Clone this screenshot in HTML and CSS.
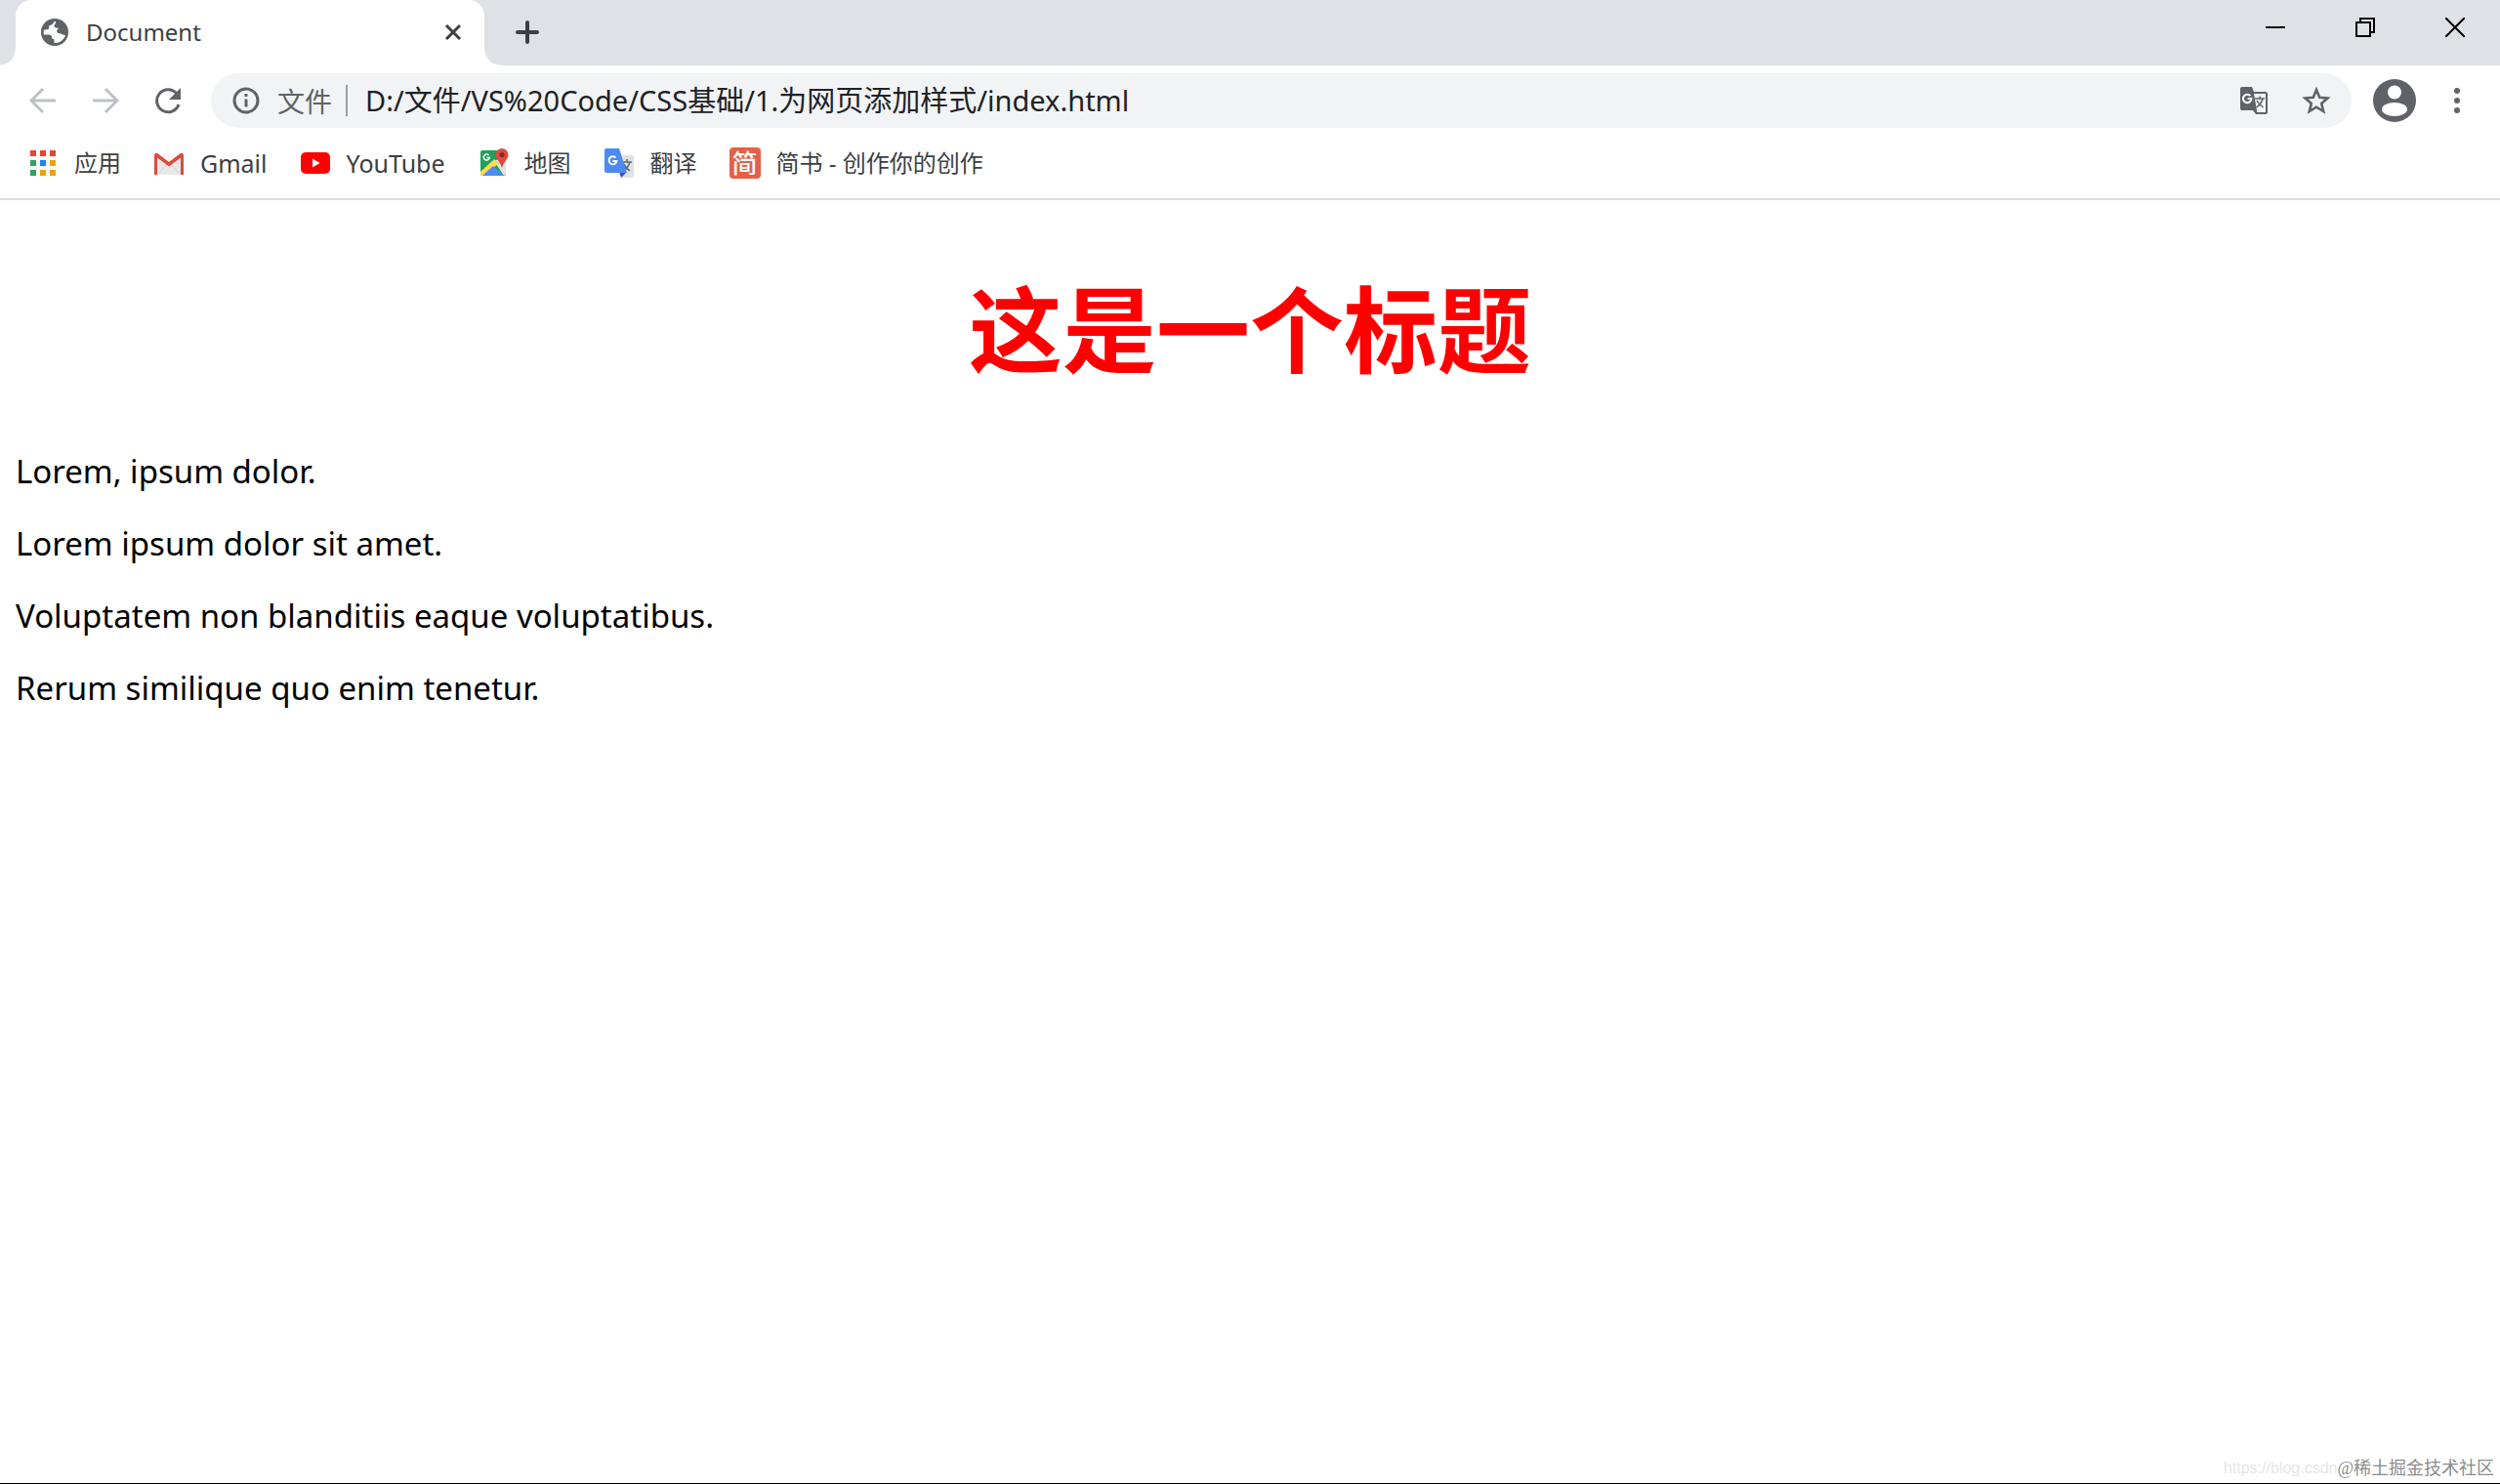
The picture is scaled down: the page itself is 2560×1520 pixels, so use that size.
FILE: index.html
```
<!DOCTYPE html>
<html lang="zh-CN">
<head>
    <meta charset="UTF-8">
    <meta name="viewport" content="width=device-width, initial-scale=1.0">
    <title>Document</title>
    <link rel="stylesheet" href="styles.css">
</head>
<body>
    <header class="browser">
        <div class="tab-strip">
            <div class="tab">
                <svg class="tab-icon" viewBox="2 2 20 20">
                    <circle cx="12" cy="12" r="10" fill="#5f6368"/>
                    <path fill="#fff" d="M12.500 3.900c-1.500.2-1.300 1.700-2.300 2.300-.8.500-1.900.3-2.200 1.200-.3.800.2 1.700-.5 2.300-.8.600-2 .3-3.200.6-.5 1.100-.5 2.400-.2 3.500h3.400c1.900 0 2.500 1 2.500 2.200 0 .8.700 1.200 1.600 1.200v2.700c3.800.3 7.300-2.300 8.300-5.900-.9.400-1.800.1-2.500-.5-.9-.8-2.700-.3-3.500-1.300-.8-1.100-.1-2.600 1.300-2.900-1.200-.5-3.200-.2-3.600-1.500-.3-1.200 1-1.600 1.200-2.500.1-.5 0-1-.3-1.400z"/>
                </svg>
                <span class="tab-title">Document</span>
                <button class="tab-close" aria-label="关闭标签页">
                    <svg width="18" height="20" viewBox="0 0 18 20"><path d="M2 3l14 14M16 3L2 17" stroke="#3c4043" stroke-width="3"/></svg>
                </button>
            </div>
            <button class="new-tab" aria-label="新标签页">
                <svg width="24" height="24" viewBox="0 0 24 24"><path d="M12 2v20M2 12h20" stroke="#3c4043" stroke-width="4" stroke-linecap="round"/></svg>
            </button>
            <div class="window-buttons">
                <button aria-label="最小化">
                    <svg width="20" height="20" viewBox="0 0 20 20"><path d="M0 10h20" stroke="#000" stroke-width="2"/></svg>
                </button>
                <button aria-label="还原">
                    <svg width="20" height="20" viewBox="0 0 20 20" fill="none" stroke="#000" stroke-width="2"><path d="M1 5h14v14H1zM5 5V1h14v14h-4"/></svg>
                </button>
                <button aria-label="关闭">
                    <svg width="20" height="20" viewBox="0 0 20 20"><path d="M0 0l20 20M20 0L0 20" stroke="#000" stroke-width="2"/></svg>
                </button>
            </div>
        </div>

        <div class="toolbar">
            <button class="nav-button" aria-label="后退">
                <svg width="28" height="28" viewBox="0 0 28 28" fill="none" stroke="#bdc1c6" stroke-width="3"><path d="M27 14H3M14 2L2 14l12 12"/></svg>
            </button>
            <button class="nav-button" aria-label="前进">
                <svg width="28" height="28" viewBox="0 0 28 28" fill="none" stroke="#bdc1c6" stroke-width="3"><path d="M1 14h24M14 2l12 12-12 12"/></svg>
            </button>
            <button class="nav-button" aria-label="重新加载">
                <svg width="28" height="28" viewBox="0 0 28 28"><path d="M23 7A11.500 11.500 0 1 0 25 18" fill="none" stroke="#5f6368" stroke-width="3"/><path d="M27 1v12H15z" fill="#5f6368"/></svg>
            </button>
            <div class="omnibox">
                <button class="site-info">
                    <svg width="28" height="28" viewBox="0 0 28 28"><circle cx="14" cy="14" r="12" fill="none" stroke="#5f6368" stroke-width="3"/><path d="M14 7v3M14 12.500v8" stroke="#5f6368" stroke-width="3"/></svg>
                    <span>文件</span>
                </button>
                <input class="address" type="text" aria-label="地址" value="D:/文件/VS%20Code/CSS基础/1.为网页添加样式/index.html">
                <button class="omnibox-action" aria-label="翻译此页">
                    <svg width="28" height="28" viewBox="0 0 28 28">
                        <path d="M2 0h10l2 5h12a2 2 0 0 1 2 2v19a2 2 0 0 1-2 2H16l-3-4H2a2 2 0 0 1-2-2V2a2 2 0 0 1 2-2z" fill="#5f6368"/>
                        <path d="M14 7h12v19H17v-2z" fill="#f1f3f4"/>
                        <path d="M10.500 9.200A4.300 4.300 0 1 0 11.500 12H7.500" fill="none" stroke="#fff" stroke-width="2"/>
                        <path d="M15 12h10M20 9.500V12M23 12c-1 4-3.500 7-6.500 9M17 14c1.500 3 3.500 5 6.500 7" fill="none" stroke="#5f6368" stroke-width="1.500"/>
                    </svg>
                </button>
                <button class="omnibox-action" aria-label="为此标签页添加书签">
                    <svg width="30" height="30" viewBox="0 0 30 30"><path d="M15 4l3.200 7.800 8.300.7-6.300 5.400 2 8.200-7.200-4.400-7.200 4.400 2-8.200-6.300-5.400 8.300-.7z" fill="none" stroke="#5f6368" stroke-width="2.600"/></svg>
                </button>
            </div>
            <button class="profile" aria-label="个人资料">
                <svg width="44" height="44" viewBox="0 0 44 44"><circle cx="22" cy="22" r="22" fill="#5f6368"/><circle cx="22" cy="13.500" r="7" fill="#fff"/><ellipse cx="22" cy="31" rx="13" ry="7" fill="#fff"/></svg>
            </button>
            <button class="menu" aria-label="菜单">
                <svg width="6" height="26" viewBox="0 0 6 26" fill="#5f6368"><circle cx="3" cy="3" r="3"/><circle cx="3" cy="13" r="3"/><circle cx="3" cy="23" r="3"/></svg>
            </button>
        </div>

        <nav class="bookmarks">
            <a href="#">
                <svg viewBox="0 0 32 32">
                    <path fill="#ea4335" d="M3 3h6v6H3zM13 3h6v6h-6zM23 3h6v6h-6z"/>
                    <path fill="#34a060" d="M3 13h6v6H3zM3 23h6v6H3z"/>
                    <path fill="#1e88e5" d="M13 13h6v6h-6z"/>
                    <path fill="#eaa500" d="M23 13h6v6h-6zM13 23h6v6h-6zM23 23h6v6h-6z"/>
                </svg>
                应用
            </a>
            <a class="latin" href="#">
                <svg viewBox="0 0 32 32">
                    <path fill="#e8e8e8" d="M3 6h26v22H3z"/>
                    <path fill="#f7f7f7" d="M4 6h24L16 16z"/>
                    <path fill="none" stroke="#d3d3d3" d="M5 27l9-10M27 27l-9-10"/>
                    <path fill="#dc4a3d" d="M1 8c0-2 2-3 3.500-1.800L16 15 27.500 6.200C29 5 31 6 31 8v20h-3V10.500l-12 9-12-9V28H1z"/>
                </svg>
                Gmail
            </a>
            <a class="latin" href="#">
                <svg viewBox="0 0 32 32">
                    <rect x="1" y="5" width="30" height="22" rx="5" fill="#f00"/>
                    <path fill="#fff" d="M13 11.500v9l7.500-4.500z"/>
                </svg>
                YouTube
            </a>
            <a href="#">
                <svg viewBox="0 0 32 32">
                    <rect x="3" y="3" width="26" height="26" rx="2" fill="#1fa15d"/>
                    <path fill="#e1e3e5" d="M17 14l12-5v18l-2 2z"/>
                    <path fill="#ffd84d" d="M3 25L17 12l5 4L7 29H3z"/>
                    <path fill="#4c8bf5" d="M5 29l11-10 11 10z"/>
                    <path fill="none" stroke="#fff" stroke-width="1.500" d="M11.500 8A3 3 0 1 0 12.300 10.500H9.500"/>
                    <path fill="#dd4b3e" d="M25 1a6.500 6.500 0 0 1 6.500 6.500c0 5-5 7-6.500 14-1.500-7-6.500-9-6.500-14A6.500 6.500 0 0 1 25 1z"/>
                    <circle cx="25" cy="7.500" r="2.500" fill="#7c2c25"/>
                </svg>
                地图
            </a>
            <a href="#">
                <svg viewBox="0 0 32 32">
                    <path fill="#e0e1e2" d="M15 8h14a2 2 0 0 1 2 2v19a2 2 0 0 1-2 2H18z"/>
                    <path fill="none" stroke="#5b6670" stroke-width="1.500" d="M19 15h10M24 12v3M27 15c-1 4-3 6-6 9M21 17c1 3 3 5 6 7"/>
                    <path fill="#3b4fc4" d="M16 25h8l-6 6z"/>
                    <path fill="#4c8bf5" d="M3 1h13l8 25H3a2 2 0 0 1-2-2V3a2 2 0 0 1 2-2z"/>
                    <path fill="none" stroke="#fff" stroke-width="2" d="M12.500 10.500A4 4 0 1 0 13.500 14H9.500"/>
                </svg>
                翻译
            </a>
            <a href="#">
                <span class="jianshu" aria-hidden="true">简</span>
                简书 - 创作你的创作
            </a>
        </nav>
    </header>

    <main class="page">
        <h1>这是一个标题</h1>
        <p>Lorem, ipsum dolor.</p>
        <p>Lorem ipsum dolor sit amet.</p>
        <p>Voluptatem non blanditiis eaque voluptatibus.</p>
        <p>Rerum similique quo enim tenetur.</p>
    </main>

    <footer class="watermark">
        <span class="watermark-url">https://blog.csdn</span>
        <span class="watermark-name">@稀土掘金技术社区</span>
    </footer>
</body>
</html>
```
FILE: styles.css
```
* {
    box-sizing: border-box;
}

body {
    display: flex;
    flex-direction: column;
    min-height: 100vh;
    margin: 0;
    background: #fff;
    color: #000;
    font-family: "Noto Sans", "Noto Sans CJK SC", sans-serif;
    border-bottom: 1px solid #000;
}

svg {
    display: block;
    flex: none;
}

button {
    display: flex;
    align-items: center;
    justify-content: center;
    flex: none;
    padding: 0;
    border: none;
    background: none;
    font: inherit;
    color: inherit;
    cursor: pointer;
}

.browser {
    border-bottom: 2px solid #dadce0;
}

/* tabs */
.tab-strip {
    display: flex;
    height: 67px;
    padding-left: 16px;
    background: #dee1e6;
}

.tab {
    position: relative;
    display: flex;
    align-items: center;
    width: 480px;
    padding: 0 22px 2px 26px;
    border-radius: 16px 16px 0 0;
    background: #fff;
}

.tab::before,
.tab::after {
    content: "";
    position: absolute;
    bottom: 0;
    width: 16px;
    height: 16px;
}

.tab::before {
    left: -16px;
    background: radial-gradient(circle at 0 0, #dee1e6 15px, #fff 16px);
}

.tab::after {
    right: -16px;
    background: radial-gradient(circle at 100% 0, #dee1e6 15px, #fff 16px);
}

.tab-icon {
    width: 28px;
    height: 28px;
}

.tab-title {
    flex: 1;
    margin-left: 18px;
    font-size: 24px;
    color: #3c4043;
}

.tab-close {
    width: 20px;
    height: 28px;
}

.new-tab {
    width: 56px;
    margin-left: 16px;
    padding-bottom: 2px;
}

.window-buttons {
    display: flex;
    height: 56px;
    margin-left: auto;
}

.window-buttons button {
    width: 92px;
}

/* address row */
.toolbar {
    display: flex;
    align-items: center;
    height: 72px;
    padding: 0 12px;
}

.nav-button {
    width: 64px;
    height: 56px;
}

.omnibox {
    display: flex;
    align-items: center;
    flex: 1;
    height: 56px;
    margin: 0 22px 0 12px;
    padding: 0 4px 0 22px;
    border-radius: 28px;
    background: #f1f3f4;
    font-size: 28px;
}

.site-info {
    gap: 18px;
    height: 32px;
    padding-right: 14px;
    border-right: 2px solid #9aa0a6;
    color: #5f6368;
}

.address {
    flex: 1;
    min-width: 0;
    padding: 0 0 4px 18px;
    border: none;
    outline: none;
    background: none;
    font: inherit;
    font-size: 29px;
    color: #202124;
}

.omnibox-action {
    width: 64px;
    height: 56px;
}

.profile {
    width: 44px;
    height: 44px;
}

.menu {
    width: 64px;
    height: 56px;
    margin-left: 10px;
}

/* bookmarks */
.bookmarks {
    display: flex;
    gap: 33px;
    height: 64px;
    padding: 10px 28px 0;
    font-size: 24px;
    line-height: 36px;
}

.bookmarks a {
    display: flex;
    align-items: center;
    gap: 16px;
    height: 36px;
    color: #3c4043;
    text-decoration: none;
    white-space: nowrap;
}

.bookmarks .latin {
    font-size: 25px;
}

.bookmarks svg {
    width: 32px;
    height: 32px;
}

.jianshu {
    width: 32px;
    height: 32px;
    border-radius: 4px;
    background: #e4604a;
    color: #fff;
    font-size: 26px;
    font-weight: 500;
    line-height: 32px;
    text-align: center;
}

/* page content */
.page {
    flex: 1;
    padding: 68px 16px 0;
    font-size: 33px;
}

.page h1 {
    margin: 0 0 58px;
    font-size: 96px;
    line-height: 128px;
    color: #f00;
    text-align: center;
}

.page p {
    margin: 0 0 26px;
    line-height: 48px;
}

.watermark {
    display: flex;
    justify-content: flex-end;
    align-items: center;
    padding: 0 6px 3px 0;
    line-height: 24px;
}

.watermark-url {
    color: #e6e6e6;
    font-family: "Liberation Sans", sans-serif;
    font-size: 16px;
}

.watermark-name {
    color: #8c8c8c;
    font-family: "Liberation Serif", "Noto Sans CJK SC", serif;
    font-size: 18px;
}
```
